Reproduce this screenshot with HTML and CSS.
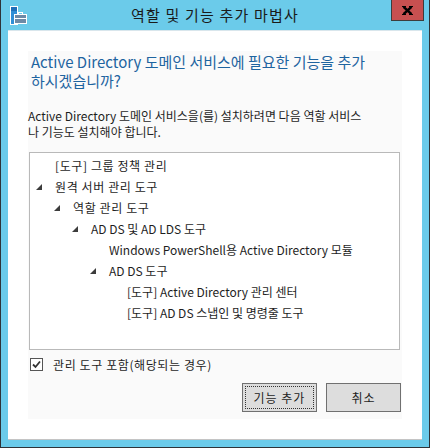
FILE: index.html
```html
<!DOCTYPE html>
<html>
  <head>
    <title>역할 및 기능 추가 마법사</title>
    <link rel="stylesheet" href="styles.css">
  </head>
  <body>
    <div class="window">
      <div class="titlebar">
        <span class="appicon">
          <svg width="18" height="20" viewBox="0 0 18 20">
            <rect x="0.5" y="0.5" width="7" height="18" fill="#2f8fd6" stroke="#ffffff"/>
            <rect x="1" y="1" width="6" height="4" fill="#1f6fb8"/>
            <rect x="4.5" y="8.5" width="12" height="9" fill="#6d8aa6" stroke="#ffffff"/>
            <rect x="8.5" y="6.5" width="4" height="2" fill="none" stroke="#ffffff"/>
            <line x1="5" y1="12.5" x2="16" y2="12.5" stroke="#ffffff"/>
          </svg>
        </span>
        <span class="title">역할 및 기능 추가 마법사</span>
        <span class="closecell">
          <button class="close">
            <svg width="11" height="9" viewBox="0 0 11 9">
              <path d="M1.5 0.8 L9.5 8.2 M9.5 0.8 L1.5 8.2" stroke="#000" stroke-width="2.4"/>
              <path d="M0 0.5 H4 M7 0.5 H11 M0 8.5 H4 M7 8.5 H11" stroke="#000" stroke-width="1"/>
            </svg>
          </button>
        </span>
      </div>

      <div class="client">
        <div class="panel">
          <h1 class="heading">Active Directory 도메인 서비스에 필요한 기능을 추가<br>하시겠습니까?</h1>

          <p class="desc">Active Directory 도메인 서비스을(를) 설치하려면 다음 역할 서비스<br>나 기능도 설치해야 합니다.</p>

          <ul class="tree">
            <li class="row lvl0"><span class="exp"></span><span class="ko">[도구] 그룹 정책 관리</span></li>
            <li class="row lvl0"><span class="exp"><i class="tri"></i></span><span class="ko">원격 서버 관리 도구</span></li>
            <li class="row lvl1"><span class="exp"><i class="tri"></i></span><span class="ko">역할 관리 도구</span></li>
            <li class="row lvl2"><span class="exp"><i class="tri"></i></span>AD DS 및 AD LDS 도구</li>
            <li class="row lvl3"><span class="exp"></span>Windows PowerShell용 Active Directory 모듈</li>
            <li class="row lvl3"><span class="exp"><i class="tri"></i></span>AD DS 도구</li>
            <li class="row lvl4"><span class="exp"></span>[도구] Active Directory 관리 센터</li>
            <li class="row lvl4"><span class="exp"></span>[도구] AD DS 스냅인 및 명령줄 도구</li>
          </ul>

          <label class="check">
            <span class="box">
              <svg width="11" height="11" viewBox="0 0 11 11">
                <path d="M2 5.5 L4.5 8 L9 2.5" fill="none" stroke="#333" stroke-width="1.8"/>
              </svg>
            </span>
            <span class="ko">관리 도구 포함(해당되는 경우)</span>
          </label>

          <div class="buttons">
            <button class="btn default"><span class="focus">기능 추가</span></button>
            <button class="btn">취소</button>
          </div>
        </div>
      </div>
    </div>
  </body>
</html>
```

FILE: styles.css
```css
body {
  margin: 0;
  font-family: "Noto Sans CJK KR", "Noto Sans", sans-serif;
  color: #1e1e1e;
}
.window {
  width: 430px;
  height: 448px;
  box-sizing: border-box;
  background: #6bcbea;
  border: 1px solid #2e3338;
  border-top: none;
  display: flex;
  flex-direction: column;
}

/* title bar */
.titlebar {
  height: 30px;
  display: grid;
  grid-template-columns: 1fr auto 1fr;
}
.appicon {
  padding: 6px 0 0 9px;
}
.title {
  font-size: 15px;
  line-height: 29px;
  letter-spacing: 1.2px;
  color: #1a1a1a;
}
.closecell {
  justify-self: end;
  margin-right: 5px;
}
.close {
  width: 33px;
  height: 21px;
  padding: 0;
  background: #c75050;
  border: 1px solid #3d3d3d;
  border-top: none;
  display: flex;
  align-items: center;
  justify-content: center;
}

/* client area */
.client {
  flex: 1;
  margin: 0 7px 7px 7px;
  background: #ffffff;
  border-top: 1px solid #d9e6ec;
  border-bottom: 1px solid #c4c4c4;
  padding: 20px;
}
.panel {
  background: #fafafa;
  height: 100%;
}
.heading {
  margin: 0;
  padding: 1px 0 0 3px;
  font-size: 15px;
  font-weight: normal;
  line-height: 19px;
  color: #1e64a0;
  white-space: nowrap;
}
.desc {
  margin: 18px 0 0 0;
  font-size: 12px;
  line-height: 16px;
  white-space: nowrap;
}
.ko {
  letter-spacing: 0.6px;
}

/* tree */
.tree {
  list-style: none;
  margin: 12px 2px 0 1px;
  padding: 2px 0 0 0;
  height: 198px;
  box-sizing: border-box;
  background: #ffffff;
  border: 1px solid #b9b9b9;
}
.row {
  height: 21px;
  display: flex;
  align-items: center;
  font-size: 12px;
  white-space: nowrap;
}
.lvl0 { padding-left: 4px; }
.lvl1 { padding-left: 22px; }
.lvl2 { padding-left: 40px; }
.lvl3 { padding-left: 58px; }
.lvl4 { padding-left: 76px; }
.exp {
  width: 21px;
  flex: none;
  display: flex;
  align-items: center;
}
.tri {
  margin-left: 2px;
  width: 0;
  height: 0;
  border-left: 6px solid transparent;
  border-bottom: 6px solid #3c3c3c;
}

/* checkbox */
.check {
  margin: 8px 0 0 2px;
  height: 13px;
  display: flex;
  align-items: center;
  font-size: 12px;
}
.box {
  width: 13px;
  height: 13px;
  box-sizing: border-box;
  border: 1px solid #555555;
  background: #ffffff;
  margin-right: 10px;
  display: flex;
  align-items: center;
  justify-content: center;
}

/* buttons */
.buttons {
  margin: 12px 1px 0 0;
  display: flex;
  justify-content: flex-end;
  gap: 9px;
}
.btn {
  width: 75px;
  height: 29px;
  padding: 0;
  background: #dddddd;
  border: 1px solid #707070;
  font-family: "Noto Sans CJK KR", "Noto Sans", sans-serif;
  font-size: 12px;
  letter-spacing: 1px;
  color: #1e1e1e;
}
.btn.default {
  padding: 2px;
}
.focus {
  display: flex;
  align-items: center;
  justify-content: center;
  height: 100%;
  box-sizing: border-box;
  border: 1px dotted #333333;
}
```
